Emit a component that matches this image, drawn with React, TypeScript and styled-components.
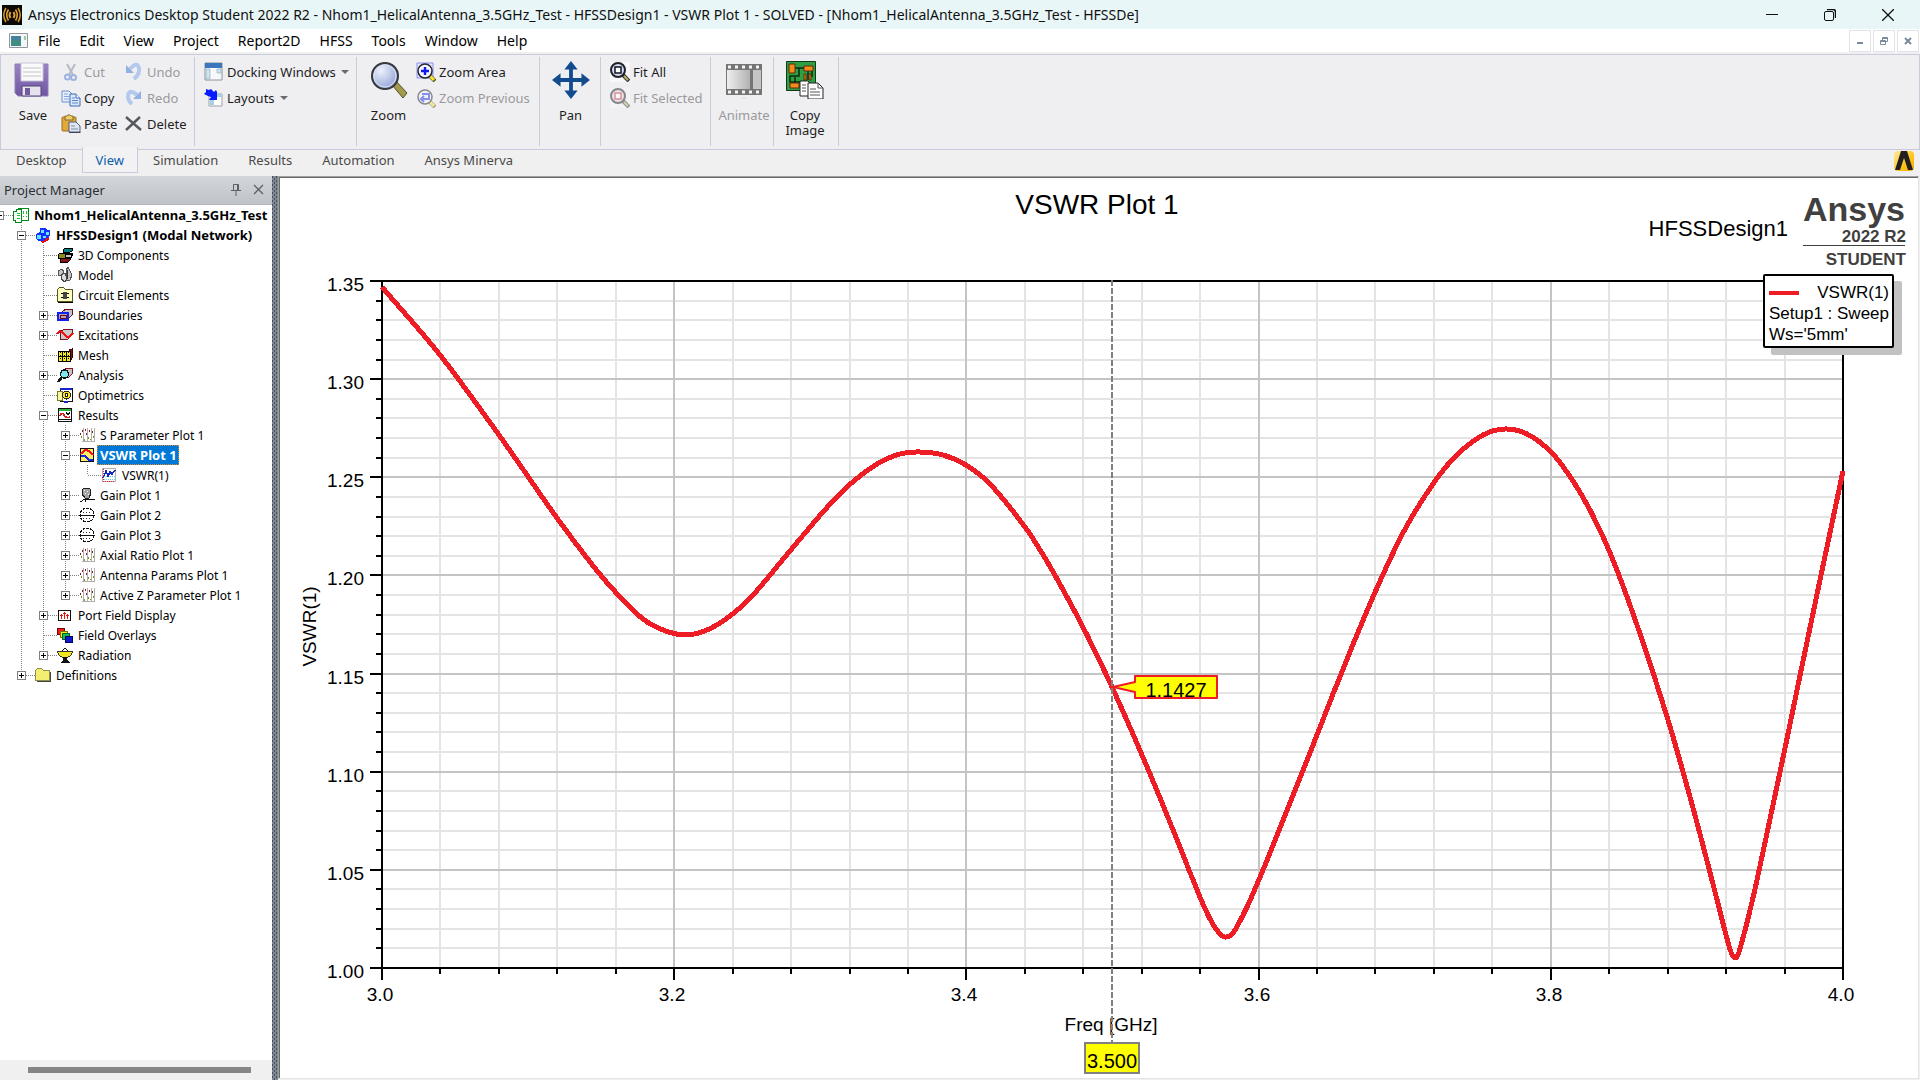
import React, { useLayoutEffect, useRef, useState } from "react";
import styled, { createGlobalStyle, css } from "styled-components";

const ui = `"Noto Sans", "Open Sans", sans-serif`;
const plotFont = `"Liberation Sans", Arial, sans-serif`;
const edge = "#c9cadc";
const traceRed = "#ee1c24";

const GlobalStyle = createGlobalStyle`
  * { box-sizing: border-box; }
  html, body { margin: 0; height: 100%; }
  #root { height: 100%; }
  body { font-family: ${ui}; background: #f0f0f0; color: #000; overflow: hidden; }
  button { font: inherit; color: inherit; background: none; border: 0; padding: 0; }
  svg { display: block; flex: none; }
`;

const AppFrame = styled.div`
  display: flex;
  flex-direction: column;
  height: 100vh;
`;

/* ---------- title bar ---------- */

const TitleBar = styled.header`
  display: flex;
  align-items: center;
  height: 29px;
  padding: 0 3px 0 2px;
  background: #e8f6f7;
`;
const TitleText = styled.h1`
  flex: 1;
  margin: 0 0 0 6px;
  font-size: 14px;
  font-weight: 400;
  line-height: 20px;
  white-space: nowrap;
  color: #101010;
`;
const WindowButton = styled.button`
  display: flex;
  align-items: center;
  justify-content: center;
  width: 58px;
  height: 29px;
`;

/* ---------- menu bar ---------- */

const MenuBar = styled.nav`
  display: flex;
  align-items: center;
  height: 23px;
  padding: 0 1px 0 9px;
  background: #fff;
`;
const MenuList = styled.div`
  display: flex;
  flex: 1;
  gap: 1px;
  padding-left: 1px;
`;
const MenuItem = styled.button`
  padding: 1px 9px 0;
  font-size: 14px;
  line-height: 22px;
`;
const ChildButtons = styled.div`
  display: flex;
  gap: 2px;
`;
const ChildButton = styled.button`
  display: flex;
  align-items: center;
  justify-content: center;
  width: 22px;
  height: 22px;
  border: 1px solid #e2e2ea;
`;

/* ---------- ribbon ---------- */

const Ribbon = styled.div`
  display: flex;
  height: 96px;
  margin-top: 2px;
  padding: 2px 0 3px;
  background: #efeff2;
  border: 1px solid ${edge};
`;
const Group = styled.div<{ $width: number }>`
  display: flex;
  width: ${(p) => p.$width}px;
  padding: 2px 0 0 4px;
  border-right: 1px solid ${edge};
`;
const Column = styled.div<{ $width?: number }>`
  display: flex;
  flex-direction: column;
  align-items: flex-start;
  width: ${(p) => (p.$width ? `${p.$width}px` : "auto")};
`;
const disabledLook = css`
  color: #9a9a9c;
`;
const SmallButton = styled.button`
  display: flex;
  align-items: center;
  gap: 3px;
  height: 26px;
  font-size: 13px;
  line-height: 18px;
  white-space: nowrap;
  color: #1e1e1e;
  &:disabled { ${disabledLook} }
`;
const BigButton = styled.button<{ $width: number }>`
  display: flex;
  flex-direction: column;
  align-items: center;
  gap: 9px;
  width: ${(p) => p.$width}px;
  height: 84px;
  padding-top: 2px;
  font-size: 13px;
  line-height: 15px;
  color: #1e1e1e;
  &:disabled { ${disabledLook} }
`;
const Arrow = styled.span`
  margin-left: 2px;
  border: 4px solid transparent;
  border-top-color: #6b6b6b;
  border-bottom-width: 0;
`;

const TabBar = styled.div`
  display: flex;
  height: 26px;
  padding: 0 6px 0 1px;
  background: #f0f0f0;
`;
const Tab = styled.button<{ $active?: boolean }>`
  height: 26px;
  margin-top: -3px;
  padding: 3px 15px;
  font-size: 13px;
  line-height: 20px;
  color: #4a4a4a;
  ${(p) =>
    p.$active &&
    css`
      padding: 3px 13px 2px;
      background: #f2f2f5;
      border: 1px solid ${edge};
      border-top: 0;
      color: #0a5fa8;
    `}
`;
const BrandMark = styled.div`
  margin-left: auto;
  padding-top: 1px;
`;

/* ---------- work area ---------- */

const WorkArea = styled.main`
  display: flex;
  flex: 1;
  min-height: 0;
  padding-right: 1px;
`;
const ProjectPanel = styled.section`
  display: flex;
  flex-direction: column;
  width: 272px;
  background: #fff;
`;
const PanelHeader = styled.div`
  display: flex;
  align-items: center;
  gap: 12px;
  height: 29px;
  padding: 0 7px 0 4px;
  background: linear-gradient(#d3d6da, #bfc3c8);
  border-bottom: 1px solid #b4b8bd;
`;
const PanelTitle = styled.h2`
  flex: 1;
  margin: 0;
  font-size: 13px;
  font-weight: 400;
  line-height: 18px;
  color: #2b2f36;
`;
const TreeScroller = styled.div`
  flex: 1;
  min-height: 0;
  overflow: hidden;
`;
const Tree = styled.ul`
  margin: 0 0 0 -11px;
  padding: 0;
  list-style: none;
`;
const TreeRow = styled.li`
  display: flex;
  align-items: center;
  height: 20px;
`;
const TreeIcon = styled.span`
  display: flex;
  padding: 0 2px;
`;
const TreeLabel = styled.span<{ $bold?: boolean; $selected?: boolean }>`
  height: 20px;
  padding: 1px 2px 0 3px;
  font-size: ${(p) => (p.$bold ? 13 : 12)}px;
  line-height: 19px;
  white-space: nowrap;
  font-weight: ${(p) => (p.$bold ? 700 : 400)};
  ${(p) =>
    p.$selected &&
    css`
      color: #fff;
      background: #0078d7;
      outline: 1px dotted #e08a2a;
      outline-offset: -1px;
    `}
`;
const ScrollTrack = styled.div`
  height: 20px;
  padding: 7px 21px 7px 28px;
  background: #f0f0f0;
`;
const ScrollThumb = styled.div`
  height: 6px;
  background: #858585;
`;
const dots = "#35517f";
const Splitter = styled.div`
  width: 6px;
  background:
    repeating-linear-gradient(${dots} 0 2px, transparent 2px 4px) 0 0 / 1px 4px repeat-y,
    repeating-linear-gradient(transparent 0 2px, ${dots} 2px 4px) 2px 0 / 1px 4px repeat-y,
    repeating-linear-gradient(${dots} 0 2px, transparent 2px 4px) 4px 0 / 1px 4px repeat-y,
    #868686;
`;
const PlotWindow = styled.section`
  display: flex;
  flex: 1;
  min-width: 0;
  border: 1px solid #a0a0a0;
  border-right-color: #e3e3e3;
  border-bottom-color: #e3e3e3;
  margin-bottom: 1px;
`;
const PlotCanvas = styled.figure`
  position: relative;
  flex: 1;
  min-width: 0;
  margin: 0;
  overflow: hidden;
  background: #fff;
  border: 1px solid #696969;
  border-right: 0;
  border-bottom: 0;
`;
const PlotText = styled.text<{ $size: number; $bold?: boolean; $color?: string }>`
  font-family: ${plotFont};
  font-size: ${(p) => p.$size}px;
  font-weight: ${(p) => (p.$bold ? 700 : 400)};
  fill: ${(p) => p.$color ?? "#000"};
`;
const Legend = styled.figcaption`
  position: absolute;
  top: 96px;
  right: 24px;
  padding: 6px 3px 1px 4px;
  border: 2px solid #000;
  border-radius: 2px;
  background: #fff;
  box-shadow: 8px 7px 0 #c2c2c2;
  font-family: ${plotFont};
  font-size: 17px;
  line-height: 21px;
`;
const LegendEntry = styled.div`
  display: flex;
  align-items: center;
  justify-content: space-between;
`;
const LegendSwatch = styled.span`
  width: 30px;
  height: 4px;
  background: ${traceRed};
`;

/* ---------- ribbon icons ---------- */

const AppLogo = () => (
  <svg width="20" height="20" viewBox="0 0 20 20" fill="none" stroke="#e0a030">
    <rect width="20" height="20" fill="#0c0a06" stroke="none" />
    <path d="M8.5 7Q6.5 10 8.5 13M11.5 7Q13.5 10 11.5 13" strokeWidth="2" />
    <path d="M6.5 4.5Q3 10 6.5 15.500M13.500 4.500Q17 10 13.500 15.500" strokeWidth="1.600" />
    <path d="M4 3Q-.5 10 4 17M16 3Q20.500 10 16 17" strokeWidth="1.400" />
  </svg>
);

const SaveIcon = () => (
  <svg width="38" height="38" viewBox="0 -1 38 38">
    <defs>
      <linearGradient id="saveBody" x1="0" y1="0" x2="0" y2="1">
        <stop offset="0" stopColor="#9b86c4" />
        <stop offset="1" stopColor="#6f55a2" />
      </linearGradient>
    </defs>
    <path d="M1 2h33v32H4l-3-3z" fill="url(#saveBody)" stroke="#8f80b4" />
    <path d="M7 1h22v18H7z" fill="#fafafa" stroke="#c9c4da" />
    <path d="M9 6h18M9 10h18M9 14h18" stroke="#c4c4c8" />
    <path d="M8 24h19v10H8z" fill="#e4e2ea" stroke="#57407f" />
    <path d="M11 26h5v7h-5z" fill="#6f5a9e" />
  </svg>
);
const CutIcon = () => (
  <svg width="20" height="20" viewBox="0 0 20 20" fill="none">
    <path d="M6 2l6 11M14 2L8 13" stroke="#b5bac4" strokeWidth="2" />
    <circle cx="6.500" cy="15" r="2.500" stroke="#9db4e0" strokeWidth="2" />
    <circle cx="12.500" cy="15.500" r="2.500" stroke="#9db4e0" strokeWidth="2" />
  </svg>
);
const CopyIcon = () => (
  <svg width="20" height="20" viewBox="0 0 20 20">
    <path d="M1 3h7l3 3v8H1z" fill="#e6effc" stroke="#6c8fca" />
    <path d="M3 6h4M3 8.500h5M3 11h5" stroke="#86a6da" />
    <path d="M9 6h6l4 4v8H9z" fill="#dce9fb" stroke="#3f6cb4" />
    <path d="M15 6v4h4" fill="#fff" stroke="#3f6cb4" />
    <path d="M11 10h3M11 12.500h6M11 15h6" stroke="#5d86c8" />
  </svg>
);
const PasteIcon = () => (
  <svg width="20" height="20" viewBox="0 0 20 20">
    <rect x="1" y="3" width="14" height="14" rx="1" fill="#e2a83a" stroke="#9c6c1c" />
    <path d="M4 2h2q2-3 4 0h2v4H4z" fill="#f0d060" stroke="#84683a" />
    <path d="M8 8h7l4 4v6H8z" fill="#dfe6f2" stroke="#4e5c76" />
    <path d="M10 12h4M10 15h7" stroke="#7f8ba4" />
    <path d="M8 18.500h11.500" stroke="#3d4556" />
  </svg>
);
const UndoIcon = () => (
  <svg width="20" height="20" viewBox="0 0 20 20">
    <path d="M6 7Q13-1 15 6Q16 12 10 17" fill="none" stroke="#b4c9ee" strokeWidth="4" />
    <path d="M2 3v8h8z" fill="#93b1e4" />
  </svg>
);
const RedoIcon = () => (
  <svg width="20" height="20" viewBox="0 0 20 20">
    <path d="M13 7Q5 0 4 8Q4 13 8 16" fill="none" stroke="#b4c9ee" strokeWidth="4" />
    <path d="M17 3v8H9z" fill="#93b1e4" />
  </svg>
);
const DeleteIcon = () => (
  <svg width="20" height="20" viewBox="0 0 20 20" fill="none">
    <path d="M2 3l15 13M16 3L2 16" stroke="#55585c" strokeWidth="2.400" />
  </svg>
);
const DockingIcon = () => (
  <svg width="20" height="20" viewBox="0 0 20 20">
    <path d="M1 1h17v17H1z" fill="#fff" stroke="#8a9099" />
    <path d="M1 1h17v5H1z" fill="#3b77bd" />
    <path d="M2 7h4v10H2zM13 7h4v4h-4z" fill="#cfe4f0" stroke="#a4bccb" />
    <path d="M8 7h4v10H8zM13 12h4v5h-4z" fill="#f6f7f8" />
  </svg>
);
const LayoutsIcon = () => (
  <svg width="20" height="20" viewBox="0 0 20 20">
    <path d="M5 6h13v12H5z" fill="#fff" stroke="#9aa3ab" />
    <path d="M5 6h13v3H5zM6 10h4v7H6z" fill="#a8d0e4" />
    <path d="M2 1l3 1 2-1 3 3 2-2 1 2v8H5l2-3-3-1-4-2 2-2z" fill="#0a1cff" />
  </svg>
);
const LensDefs = () => (
  <defs>
    <radialGradient id="lens" cx=".35" cy=".3" r=".8">
      <stop offset="0" stopColor="#eef2fc" />
      <stop offset="1" stopColor="#8b9cd4" />
    </radialGradient>
  </defs>
);
const ZoomIcon = () => (
  <svg width="38" height="38" viewBox="0 0 38 38">
    <LensDefs />
    <path d="M22 24l4-4 11 12-4 5z" fill="#a39a4c" stroke="#55502a" />
    <circle cx="15" cy="15" r="13" fill="url(#lens)" stroke="#35383e" strokeWidth="2" />
    <circle cx="15" cy="15" r="11" fill="none" stroke="#dde2ee" />
  </svg>
);
const ZoomAreaIcon = ({ dim }: { dim?: boolean }) => (
  <svg width="20" height="20" viewBox="0 0 20 20" opacity={dim ? 0.5 : 1}>
    {!dim && <path d="M1 1h16v15H1z" fill="#e4e6ff" stroke="#8c90ee" />}
    <path d="M13 13l6 6" stroke="#55502a" strokeWidth="4" />
    <path d="M14 14l4 4" stroke="#f6e92e" strokeWidth="3" />
    <circle cx="9" cy="9" r="7" fill="#f4f5ff" stroke="#25262c" strokeWidth="1.500" />
    {dim ? (
      <path d="M6 6h7v5H6M8 8l-3 3 3 3" fill="none" stroke="#2632e8" strokeWidth="2" />
    ) : (
      <path d="M9 5v8M5 9h8" stroke="#1018f0" strokeWidth="2.400" />
    )}
  </svg>
);
const PanIcon = () => (
  <svg width="40" height="38" viewBox="0 0 40 40" fill="#134c8e">
    <path d="M20 0l7 9h-5v9h9v-5l9 7-9 7v-5h-9v9h5l-7 9-7-9h5v-9H9v5l-9-7 9-7v5h9V9h-5z" />
  </svg>
);
const FitIcon = ({ dim }: { dim?: boolean }) => (
  <svg width="20" height="20" viewBox="0 0 20 20" opacity={dim ? 0.5 : 1}>
    <path d="M0 0h20v20H0z" fill="#f8f8f8" />
    <path d="M13 13l6 6" stroke="#3b3b38" strokeWidth="4" />
    <path d="M14 14l4 4" stroke="#b9b368" strokeWidth="2" />
    <circle cx="8" cy="8" r="7" fill={dim ? "#f0d4d8" : "#d4daf0"} stroke="#202228" strokeWidth="2" />
    <rect x="5" y="5" width="6" height="6" fill="#fff" stroke={dim ? "#c03848" : "#10131c"} strokeWidth="1.500" />
  </svg>
);
const FilmIcon = () => (
  <svg width="38" height="38" viewBox="0 0 38 38">
    <defs>
      <linearGradient id="film">
        <stop offset="0" stopColor="#eeeeee" />
        <stop offset="1" stopColor="#b2b2b2" />
      </linearGradient>
    </defs>
    <path d="M1 3h36v31H1z" fill="#757575" />
    <path d="M2 9h23v19H2z" fill="url(#film)" />
    <path d="M28 9h8v19h-8z" fill="#c4c4c4" />
    <path d="M3 6h34M3 31h34" stroke="#f4f4f4" strokeWidth="3" strokeDasharray="3 4" />
    <path d="M17 37h4" stroke="#dadade" />
  </svg>
);
const CopyImageIcon = () => (
  <svg width="38" height="38" viewBox="0 0 38 38">
    <path d="M.5.5h29v29H.5z" fill="#2ea043" stroke="#0e3a18" />
    <path d="M9 7h9M13 7v8H4v6h10M22 10v9M26 10v6M9 16v6" fill="none" stroke="#0d2812" strokeWidth="1.500" />
    <path d="M3 3h6v9H3zM18 5h9v5h-9zM4 22h9v5H4zM18 13h2v6h-2zM23 13h2v6h-2z" fill="#f58a1c" stroke="#5a2c06" />
    <path d="M14 20h8l3 3v12H14z" fill="#fff" stroke="#222" />
    <path d="M22 22h10l5 5v11H22z" fill="#fff" stroke="#222" />
    <path d="M32 22v5h5M16 24h4M16 27h4M16 30h4M24 28h6M24 31h10M24 34h10" fill="none" stroke="#555" />
  </svg>
);

const AnsysMark = () => (
  <svg width="20" height="20" viewBox="0 0 20 20">
    <defs>
      <linearGradient id="mark" x1="0" y1="0" x2="1" y2="1">
        <stop offset="0" stopColor="#ffe9a0" />
        <stop offset=".6" stopColor="#ffc516" />
        <stop offset="1" stopColor="#f7a400" />
      </linearGradient>
    </defs>
    <rect width="20" height="20" rx="4" fill="url(#mark)" />
    <path d="M7 0h6l6 19h-5L10 7 6 19H1z" fill="#231f20" />
  </svg>
);

/* ---------- tree icons ---------- */

type IconName =
  | "project" | "design" | "components" | "model" | "circuit" | "boundaries"
  | "excitations" | "mesh" | "analysis" | "optimetrics" | "results" | "rect"
  | "vswr" | "trace" | "gain3d" | "polar" | "port" | "overlays" | "radiation" | "folder";

const glyphs: Record<IconName, React.ReactNode> = {
  project: (
    <>
      <path d="M5.500 1.500h10v12h-10z" fill="#fff" stroke="#008a1c" />
      <path d="M.5 4.500h3v-2h5v13h-6v-2h-2z" fill="#fff" stroke="#008a1c" />
      <path d="M4 6.500h3M4 8.500h3M4 11.500h3M10.500 4v3M13.500 4v3M10 9.500h1M13 9.500h1" stroke="#19c83a" />
    </>
  ),
  design: (
    <>
      <path d="M5 15l9-5v3l-6 3z" fill="#e81010" />
      <path d="M5 1h5l2 2h3v5l-3 3-4 3H3L1 12V7l4-2z" fill="#1632ff" />
      <path d="M6 3h3v3H6zM11 5h3v3h-3zM2 8h4v4H2zM8 9h3v2H8z" fill="#62e6ff" />
    </>
  ),
  components: (
    <>
      <path d="M6 3l2-2h7v3l-2 1H6z" fill="#0b8080" stroke="#000" />
      <path d="M1 8l2-2h12v3l-2 2H1z" fill="#8a8a1c" stroke="#000" />
      <path d="M8 7h6v3H8z" fill="#c8c8c8" stroke="#000" />
      <path d="M3 13l2-2h8v2l-2 2H3z" fill="#8a1414" stroke="#000" />
    </>
  ),
  model: (
    <>
      <path d="M1 4l4-2 2 3-3 4-3-1zM9 3l2-3 4 8-2 5-3 1z" fill="#c4c4c4" stroke="#555" />
      <path d="M4 8l4-2 2 5-2 4-4-3z" fill="#dcdcdc" stroke="#444" />
      <path d="M10.500 3v9" stroke="#333" />
    </>
  ),
  circuit: (
    <>
      <path d="M.5 14.500v-12l2-2h4l2 2h7v12z" fill="#ffffc0" stroke="#55551c" />
      <path d="M1 15.500h15" stroke="#000" />
      <path d="M6 5h4v7H6z" fill="#444" />
      <path d="M4 6.500h2M4 10.500h2M10 6.500h2M10 10.500h2" stroke="#000" />
    </>
  ),
  boundaries: (
    <>
      <path d="M5 5l4-3h6v6l-3 3z" fill="#c4c4c4" stroke="#6d0c16" />
      <path d="M1 6h10v7H1z" fill="#b9a0ac" stroke="#1222ee" strokeWidth="2" />
      <path d="M3 8h6v3H3z" fill="none" stroke="#6d0c16" />
    </>
  ),
  excitations: (
    <>
      <path d="M3 5l5-3h7v6l-4 4H3z" fill="#c9c9c9" stroke="#7d1420" />
      <path d="M0 7q3-5 6-1t5 4 5-4" fill="none" stroke="#f01414" strokeWidth="2" />
    </>
  ),
  mesh: (
    <>
      <path d="M12 3l3-1v9l-2 3z" fill="#8a1414" stroke="#400" />
      <path d="M1 4h12v10H1z" fill="#f4e81c" stroke="#000" />
      <path d="M1 9h12M5 4v10M9 4v10" stroke="#000" />
      <path d="M3 5v8M7 5v8M11 5v8" stroke="#000" strokeDasharray="1 2" />
    </>
  ),
  analysis: (
    <>
      <path d="M7 3l3-2h5v6l-4 4z" fill="#c4c4c4" stroke="#8a1424" />
      <circle cx="7.500" cy="7" r="4" fill="#7fe6ee" stroke="#111" strokeWidth="1.500" />
      <path d="M5 10l-4 5" stroke="#111" strokeWidth="2.500" />
    </>
  ),
  optimetrics: (
    <>
      <path d="M3 1.500h12v13H3z" fill="#fff" stroke="#111" />
      <path d="M3 1h12v2H3z" fill="#1424c8" />
      <path d="M.5 4.500h5v9h-5z" fill="#fbf6a4" stroke="#7c7c20" />
      <circle cx="9.500" cy="8" r="4" fill="#f8e818" stroke="#222" />
      <circle cx="9.500" cy="8" r="1.500" fill="#fff" stroke="#222" />
      <path d="M7 15h4" stroke="#1424c8" strokeWidth="2" />
    </>
  ),
  results: (
    <>
      <path d="M1.500 1.500h13v13h-13z" fill="#fff" stroke="#111" />
      <path d="M2 2h12v2H2z" fill="#28b43c" />
      <path d="M3 9q2-5 4-1t6 2" fill="none" stroke="#e01818" strokeWidth="1.500" />
      <path d="M9 5l2 3 2-3M1 12.500h13" fill="none" stroke="#111" />
    </>
  ),
  rect: (
    <>
      <path d="M4.500 1v14M8.500 1v14M12.500 1v14M15.500 1v14M3 14.500h12" stroke="#b0b0b0" />
      <path d="M1.500 6v2M3.500 3v2M6.500 2v2M7.500 6v2M10.500 3v2M13.500 4v2" stroke="#8c1c24" />
      <path d="M2.500 9v2M5.500 12v2M9.500 10v2M14.500 9v2M11.500 12v1" stroke="#8c8c1c" />
    </>
  ),
  vswr: (
    <>
      <path d="M1.500 1.500h13v13h-13z" fill="#ffec60" stroke="#111" />
      <path d="M2 7q5-8 12 1" fill="none" stroke="#ee1616" strokeWidth="2" />
      <path d="M2 9q4-1 6 2t6 2" fill="none" stroke="#1428e8" strokeWidth="2" />
    </>
  ),
  trace: (
    <>
      <path d="M1.500 1.500h13v13h-13z" fill="#fff" stroke="#b4b4b4" />
      <path d="M3 12h11M3 9h11" stroke="#58d8e8" strokeDasharray="1 1" />
      <path d="M2 11l3-7 2 5 2-4 2 2 3-4" fill="none" stroke="#1428c8" strokeWidth="1.500" />
      <path d="M2.500 2v12M2 14.500h12" stroke="#e02828" strokeDasharray="1 1" />
    </>
  ),
  gain3d: (
    <>
      <path d="M4 2l3-1 4 1 1 4-2 5H6L3 7z" fill="#a4a4a4" stroke="#222" />
      <path d="M5 3.500h1M8 4.500h1M6 6.500h1M9 7.500h1" stroke="#fff" />
      <path d="M6.500 11v4M6 12l-5 3M6 12.500h10" stroke="#111" />
    </>
  ),
  polar: (
    <>
      <circle cx="8" cy="8" r="7" fill="#fff" stroke="#111" strokeDasharray="3 1" />
      <path d="M0 8.500h16" stroke="#111" />
      <path d="M4 5.500h8M4 11.500h8" stroke="#333" strokeDasharray="1 2" />
    </>
  ),
  port: (
    <>
      <path d="M1.500 3.500h12v10h-12z" fill="#fff" stroke="#111" />
      <path d="M4.500 7v5M7.500 5v7M10.500 7v5M3 8.500h3M6 6.500h3M9 8.500h3" stroke="#e41414" />
    </>
  ),
  overlays: (
    <>
      <path d="M.5 1.500h7v6h-7z" fill="#ee1c1c" stroke="#700" />
      <path d="M3 4.500h7v6H3z" fill="#f8ec20" stroke="#770" />
      <path d="M5.500 6.500h7v6h-7z" fill="#1cb84c" stroke="#063" />
      <path d="M8.500 9.500h7v6h-7z" fill="#1018c8" stroke="#006" />
    </>
  ),
  radiation: (
    <>
      <path d="M5 4q3-5 6 0" fill="none" stroke="#111" />
      <path d="M.5 4.500h15q-1 5-6 6h-3q-5-1-6-6z" fill="#f2e81e" stroke="#333" />
      <path d="M6 10h4v3l3 3H3l3-3z" fill="#111" />
    </>
  ),
  folder: (
    <>
      <path d="M.5 13.500v-10l2-2h4l2 2h6v10z" fill="#f3ee70" stroke="#8c8c50" />
      <path d="M15 5v9H2" fill="none" stroke="#444" />
    </>
  ),
};

const Glyph = ({ name }: { name: IconName }) => (
  <svg width="16" height="16" viewBox="0 0 16 16" fill="none" shapeRendering="crispEdges" overflow="visible">
    {glyphs[name]}
  </svg>
);

/* ---------- project tree ---------- */

interface Node {
  label: string;
  icon: IconName;
  open?: boolean;
  bold?: boolean;
  selected?: boolean;
  expandable?: boolean;
  children?: Node[];
}

const project: Node = {
  label: "Nhom1_HelicalAntenna_3.5GHz_Test",
  icon: "project",
  bold: true,
  open: true,
  children: [
    {
      label: "HFSSDesign1 (Modal Network)",
      icon: "design",
      bold: true,
      open: true,
      children: [
        { label: "3D Components", icon: "components" },
        { label: "Model", icon: "model" },
        { label: "Circuit Elements", icon: "circuit" },
        { label: "Boundaries", icon: "boundaries", expandable: true },
        { label: "Excitations", icon: "excitations", expandable: true },
        { label: "Mesh", icon: "mesh" },
        { label: "Analysis", icon: "analysis", expandable: true },
        { label: "Optimetrics", icon: "optimetrics" },
        {
          label: "Results",
          icon: "results",
          open: true,
          children: [
            { label: "S Parameter Plot 1", icon: "rect", expandable: true },
            {
              label: "VSWR Plot 1",
              icon: "vswr",
              bold: true,
              selected: true,
              open: true,
              children: [{ label: "VSWR(1)", icon: "trace" }],
            },
            { label: "Gain Plot 1", icon: "gain3d", expandable: true },
            { label: "Gain Plot 2", icon: "polar", expandable: true },
            { label: "Gain Plot 3", icon: "polar", expandable: true },
            { label: "Axial Ratio Plot 1", icon: "rect", expandable: true },
            { label: "Antenna Params Plot 1", icon: "rect", expandable: true },
            { label: "Active Z Parameter Plot 1", icon: "rect", expandable: true },
          ],
        },
        { label: "Port Field Display", icon: "port", expandable: true },
        { label: "Field Overlays", icon: "overlays" },
        { label: "Radiation", icon: "radiation", expandable: true },
      ],
    },
    { label: "Definitions", icon: "folder", expandable: true },
  ],
};

interface Row {
  node: Node;
  level: number;
  /* for each column: does the vertical guide carry on below this row */
  rails: boolean[];
}

function flatten(node: Node, rails: boolean[], level = 0): Row[] {
  const kids = node.children ?? [];
  return [
    { node, level, rails },
    ...kids.flatMap((kid, i) => flatten(kid, [...rails, i < kids.length - 1], level + 1)),
  ];
}
const rows = flatten(project, [false]);

const Guide = ({ own, more, node }: { own: boolean; more: boolean; node: Node }) => {
  const boxed = own && (node.open || node.expandable);
  return (
    <svg width="22" height="20" viewBox="0 0 22 20" fill="none" shapeRendering="crispEdges" overflow="visible" stroke="#808080">
      {(own || more) && <path d={`M10.500 0V${more ? 20 : 10}`} strokeDasharray="1 1" />}
      {own && <path d="M11 10.500H24" strokeDasharray="1 1" />}
      {boxed && <path d="M6.500 6.500h8v8h-8z" fill="#fff" />}
      {boxed && <path d={node.open ? "M8 10.500h5" : "M8 10.500h5M10.500 8v5"} stroke="#000" />}
    </svg>
  );
};

const ProjectTree = () => (
  <Tree role="tree" aria-label="Project Manager">
    {rows.map(({ node, level, rails }) => (
      <TreeRow key={node.label} role="treeitem" aria-level={level + 1} aria-selected={!!node.selected}>
        {rails.map((more, i) => (
          <Guide key={i} own={i === level} more={more} node={node} />
        ))}
        <TreeIcon>
          <Glyph name={node.icon} />
        </TreeIcon>
        <TreeLabel $bold={node.bold} $selected={node.selected}>
          {node.label}
        </TreeLabel>
      </TreeRow>
    ))}
  </Tree>
);

/* ---------- plot ---------- */

/* Sweep samples on a grid of 1461 steps (3 to 4 GHz) by 687 steps (VSWR 1 to 1.35). */
const GRID_X = 1461;
const GRID_Y = 687;
const samples: [number, number][] = [
  [0, 681], [58, 613], [117, 533], [175, 450], [212, 401], [238, 371],
  [261, 349], [281, 338], [303, 333], [325, 338], [348, 352], [371, 373], [398, 405],
  [441, 456], [466, 482], [495, 504], [518, 514], [538, 516], [561, 513], [584, 503], [608, 484],
  [643, 441], [663, 410], [685, 371], [705, 333], [730, 281], [760, 213], [783, 158], [807, 98],
  [818, 71], [828, 49], [838, 34], [844, 31], [851, 35], [865, 61], [881, 98], [900, 145],
  [935, 233], [951, 274], [972, 326], [994, 378], [1022, 437], [1053, 487], [1076, 514],
  [1101, 533], [1123, 539], [1145, 534], [1169, 516], [1189, 490], [1209, 456], [1229, 413],
  [1255, 343], [1286, 248], [1311, 160], [1331, 84], [1344, 33], [1349, 16], [1353, 10], [1357, 16],
  [1370, 66], [1381, 116], [1402, 215], [1420, 302], [1438, 388], [1453, 459], [1461, 497],
];

const inset = { left: 102, right: 75, top: 103, bottom: 110 };

function smoothPath(points: [number, number][]) {
  const f = (n: number) => n.toFixed(1);
  let d = `M${f(points[0][0])} ${f(points[0][1])}`;
  for (let i = 0; i < points.length - 1; i++) {
    const p0 = points[Math.max(0, i - 1)];
    const p1 = points[i];
    const p2 = points[i + 1];
    const p3 = points[Math.min(points.length - 1, i + 2)];
    /* tangents weighted by span, so uneven sample spacing leaves no kinks */
    const span = p2[0] - p1[0];
    const s1 = (p2[1] - p0[1]) / (p2[0] - p0[0]);
    const s2 = (p3[1] - p1[1]) / (p3[0] - p1[0]);
    d += `C${f(p1[0] + span / 3)} ${f(p1[1] + (s1 * span) / 3)} ${f(p2[0] - span / 3)} ${f(p2[1] - (s2 * span) / 3)} ${f(p2[0])} ${f(p2[1])}`;
  }
  return d;
}

const VswrPlot = () => {
  const ref = useRef<HTMLElement>(null);
  const [size, setSize] = useState({ w: 1600, h: 900 });

  useLayoutEffect(() => {
    const el = ref.current!;
    const measure = () => setSize({ w: el.clientWidth, h: el.clientHeight });
    measure();
    const observer = new ResizeObserver(measure);
    observer.observe(el);
    return () => observer.disconnect();
  }, []);

  const { w, h } = size;
  const x0 = inset.left;
  const x1 = w - inset.right;
  const y0 = h - inset.bottom;
  const y1 = inset.top;
  const px = (freq: number) => x0 + (freq - 3) * (x1 - x0);
  const py = (v: number) => y0 - ((v - 1) / 0.35) * (y0 - y1);

  const xTicks = Array.from({ length: 26 }, (_, i) => ({ at: Math.round(px(3 + i * 0.04)), major: i % 5 === 0, text: (3 + i * 0.04).toFixed(1) }));
  const yTicks = Array.from({ length: 36 }, (_, i) => ({ at: Math.round(py(1 + i * 0.01)), major: i % 5 === 0, text: (1 + i * 0.01).toFixed(2) }));
  const minorGrid = [
    ...xTicks.filter((t) => !t.major).map((t) => `M${t.at} ${y1}V${y0}`),
    ...yTicks.filter((t) => !t.major).map((t) => `M${x0} ${t.at}H${x1}`),
  ].join("");
  const majorGrid = [
    ...xTicks.filter((t) => t.major).map((t) => `M${t.at} ${y1}V${y0}`),
    ...yTicks.filter((t) => t.major).map((t) => `M${x0} ${t.at}H${x1}`),
  ].join("");
  const tickMarks = [
    ...xTicks.map((t) => `M${t.at} ${y0}v${t.major ? 12 : 6}`),
    ...yTicks.map((t) => `M${x0} ${t.at}h${t.major ? -12 : -6}`),
  ].join("");
  const trace = smoothPath(
    samples.map(([sx, sy]) => [x0 + (sx / GRID_X) * (x1 - x0), y0 - (sy / GRID_Y) * (y0 - y1)])
  );
  const mx = Math.floor(px(3.5));
  const my = Math.round(py(1.1427)) - 1;

  return (
    <PlotCanvas ref={ref}>
      <svg width={w} height={h} fill="none" role="img" aria-label="VSWR against frequency">
        <PlotText $size={28} x={w / 2 - 2} y={36} textAnchor="middle">VSWR Plot 1</PlotText>
        <PlotText $size={22} x={w - 130} y={58} textAnchor="end">HFSSDesign1</PlotText>
        <PlotText $size={34} $bold $color="#404040" x={w - 13} y={43} textAnchor="end">Ansys</PlotText>
        <PlotText $size={17} $bold $color="#404040" x={w - 12} y={64} textAnchor="end">2022 R2</PlotText>
        <path d={`M${w - 115} 67.500H${w - 13}`} stroke="#404040" />
        <PlotText $size={17} $bold $color="#404040" x={w - 12} y={87} textAnchor="end">STUDENT</PlotText>

        <g shapeRendering="crispEdges" strokeWidth="2">
          <path d={minorGrid} stroke="#e4e4e4" />
          <path d={majorGrid} stroke="#c4c4c4" />
          <path d={`M${x0} ${y1}H${x1}V${y0}H${x0}z`} stroke="#000" />
          <path d={tickMarks} stroke="#000" />
          <path d={trace} stroke={traceRed} strokeWidth="5" strokeLinejoin="round" />
        </g>

        {xTicks.filter((t) => t.major).map((t) => (
          <PlotText key={t.text} $size={19} x={t.at - 2} y={y0 + 33} textAnchor="middle">{t.text}</PlotText>
        ))}
        {yTicks.filter((t) => t.major).map((t) => (
          <PlotText key={t.text} $size={19} x={x0 - 18} y={t.at + 10} textAnchor="end">{t.text}</PlotText>
        ))}
        <PlotText $size={19} x={mx - 1} y={y0 + 63} textAnchor="middle">Freq [GHz]</PlotText>
        <PlotText $size={19} transform={`translate(36 ${(y0 + y1) / 2 + 2}) rotate(-90)`} textAnchor="middle">VSWR(1)</PlotText>

        <path d={`M${mx} ${y1 - 1}V${y0 + 74}`} stroke="#808080" strokeWidth="2" strokeDasharray="6 2" shapeRendering="crispEdges" />
        <path
          d={`M${mx + 1} ${my}l22-5v-6h82v22h-82v-6z`}
          fill="#ffff00"
          stroke={traceRed}
          strokeWidth="2"
          strokeLinejoin="round"
        />
        <PlotText $size={20} x={mx + 64} y={my + 10} textAnchor="middle">1.1427</PlotText>
        <path d={`M${mx - 27} ${y0 + 75}h54v30h-54z`} fill="#ffff00" stroke="#808080" strokeWidth="2" />
        <PlotText $size={20} x={mx} y={y0 + 100} textAnchor="middle">3.500</PlotText>
      </svg>
      <Legend>
        <LegendEntry>
          <LegendSwatch />
          VSWR(1)
        </LegendEntry>
        <div>Setup1 : Sweep</div>
        <div>Ws='5mm'</div>
      </Legend>
    </PlotCanvas>
  );
};

/* ---------- page ---------- */

const menus = ["File", "Edit", "View", "Project", "Report2D", "HFSS", "Tools", "Window", "Help"];
const tabs = ["Desktop", "View", "Simulation", "Results", "Automation", "Ansys Minerva"];

export default function App() {
  return (
    <AppFrame>
      <GlobalStyle />
      <TitleBar>
        <AppLogo />
        <TitleText>
          Ansys Electronics Desktop Student 2022 R2 - Nhom1_HelicalAntenna_3.5GHz_Test - HFSSDesign1 - VSWR Plot 1 - SOLVED - [Nhom1_HelicalAntenna_3.5GHz_Test - HFSSDe]
        </TitleText>
        <WindowButton aria-label="Minimize">
          <svg width="12" height="12"><path d="M0 5.500h12" stroke="#111" /></svg>
        </WindowButton>
        <WindowButton aria-label="Restore">
          <svg width="12" height="12" fill="none" stroke="#111">
            <rect x=".5" y="2.500" width="9" height="9" rx="1.500" />
            <path d="M3 .5h6q2.500 0 2.500 2.500v6" strokeWidth="1.500" />
          </svg>
        </WindowButton>
        <WindowButton aria-label="Close">
          <svg width="12" height="12"><path d="M0 0l12 12M12 0L0 12" stroke="#111" strokeWidth="1.300" /></svg>
        </WindowButton>
      </TitleBar>

      <MenuBar aria-label="Main menu">
        <svg width="19" height="15" viewBox="0 0 19 15">
          <path d="M.5.5h18v14H.5z" fill="#f4f6f8" stroke="#8f969e" />
          <path d="M2 3h10v10H2z" fill="#3f8d84" />
          <path d="M2 3h10v4H2z" fill="#4a7aa8" opacity=".6" />
          <path d="M16 3v4" stroke="#3fa34d" />
        </svg>
        <MenuList>
          {menus.map((m) => (
            <MenuItem key={m}>{m}</MenuItem>
          ))}
        </MenuList>
        <ChildButtons>
          <ChildButton aria-label="Minimize plot">
            <svg width="8" height="8"><path d="M1 6h6" stroke="#7b8a9c" strokeWidth="2" /></svg>
          </ChildButton>
          <ChildButton aria-label="Restore plot">
            <svg width="8" height="8" fill="none" stroke="#7b8a9c">
              <path d="M.5 3.500h5v4h-5zM.5 4.500h5M2.500 3V.5h5v4H6M2.500 1.500h5" />
            </svg>
          </ChildButton>
          <ChildButton aria-label="Close plot">
            <svg width="8" height="8"><path d="M1 1l6 6M7 1L1 7" stroke="#7b8a9c" strokeWidth="2" /></svg>
          </ChildButton>
        </ChildButtons>
      </MenuBar>

      <Ribbon>
        <Group $width={194}>
          <BigButton $width={56}><SaveIcon />Save</BigButton>
          <Column $width={63}>
            <SmallButton disabled><CutIcon />Cut</SmallButton>
            <SmallButton><CopyIcon />Copy</SmallButton>
            <SmallButton><PasteIcon />Paste</SmallButton>
          </Column>
          <Column>
            <SmallButton disabled><UndoIcon />Undo</SmallButton>
            <SmallButton disabled><RedoIcon />Redo</SmallButton>
            <SmallButton><DeleteIcon />Delete</SmallButton>
          </Column>
        </Group>
        <Group $width={162}>
          <Column $width={5} />
          <Column>
            <SmallButton><DockingIcon />Docking Windows<Arrow /></SmallButton>
            <SmallButton><LayoutsIcon />Layouts<Arrow /></SmallButton>
          </Column>
        </Group>
        <Group $width={183}>
          <BigButton $width={55}><ZoomIcon />Zoom</BigButton>
          <Column>
            <SmallButton><ZoomAreaIcon />Zoom Area</SmallButton>
            <SmallButton disabled><ZoomAreaIcon dim />Zoom Previous</SmallButton>
          </Column>
        </Group>
        <Group $width={61}>
          <BigButton $width={53}><PanIcon />Pan</BigButton>
        </Group>
        <Group $width={110}>
          <Column $width={5} />
          <Column>
            <SmallButton><FitIcon />Fit All</SmallButton>
            <SmallButton disabled><FitIcon dim />Fit Selected</SmallButton>
          </Column>
        </Group>
        <Group $width={63}>
          <BigButton $width={58} disabled><FilmIcon />Animate</BigButton>
        </Group>
        <Group $width={65}>
          <BigButton $width={54}><CopyImageIcon />Copy Image</BigButton>
        </Group>
      </Ribbon>

      <TabBar role="tablist">
        {tabs.map((t) => (
          <Tab key={t} role="tab" aria-selected={t === "View"} $active={t === "View"}>{t}</Tab>
        ))}
        <BrandMark><AnsysMark /></BrandMark>
      </TabBar>

      <WorkArea>
        <ProjectPanel>
          <PanelHeader>
            <PanelTitle>Project Manager</PanelTitle>
            <button aria-label="Pin panel">
              <svg width="10" height="12" fill="none" stroke="#5c6168">
                <path d="M2.500 6.500v-6h5v6M0 6.500h10M5 7v5M6.500 1v5" />
              </svg>
            </button>
            <button aria-label="Close panel">
              <svg width="12" height="12"><path d="M1 1l9 9M10 1l-9 9" stroke="#5c6168" strokeWidth="1.300" /></svg>
            </button>
          </PanelHeader>
          <TreeScroller>
            <ProjectTree />
          </TreeScroller>
          <ScrollTrack>
            <ScrollThumb />
          </ScrollTrack>
        </ProjectPanel>
        <Splitter />
        <PlotWindow>
          <VswrPlot />
        </PlotWindow>
      </WorkArea>
    </AppFrame>
  );
}
